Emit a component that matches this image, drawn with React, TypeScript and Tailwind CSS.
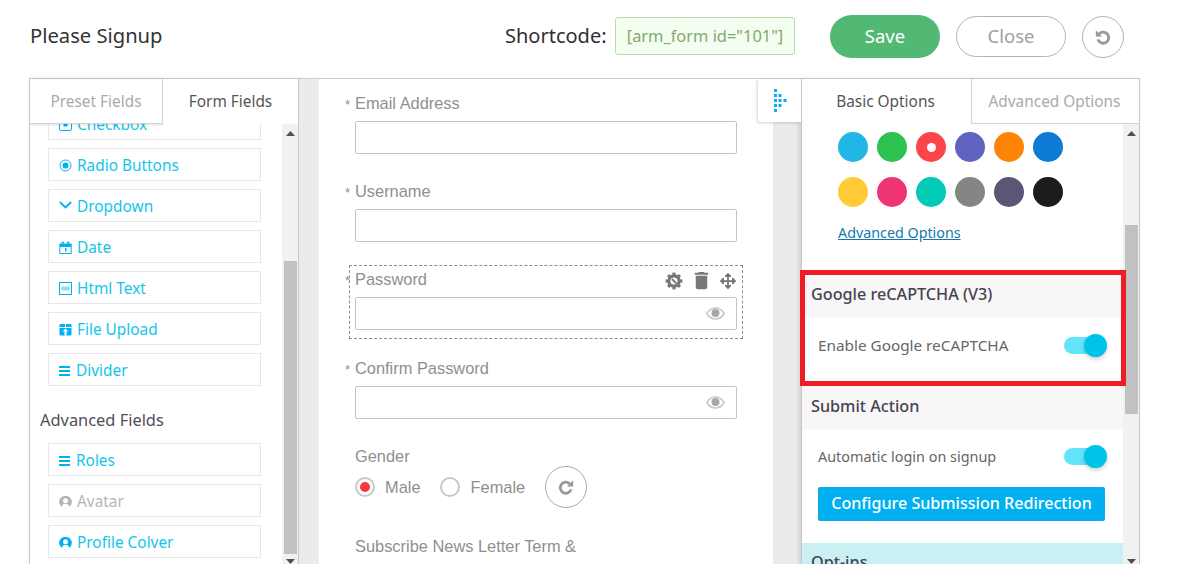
import React from "react";
import { MdDelete } from "react-icons/md";
import { FaArrowsAlt } from "react-icons/fa";

const C = "#00b0f0";

const Ic = ({ children }: { children: React.ReactNode }) => (
  <svg width="13" height="13" viewBox="0 0 13 13" className="shrink-0">{children}</svg>
);

const CheckIc = () => (
  <Ic>
    <rect x="0.5" y="0.5" width="12" height="12" rx="1.5" fill="none" stroke={C} strokeWidth="1" />
    <rect x="4.500" y="4.500" width="4" height="4" fill={C} />
  </Ic>
);
const RadioIc = () => (
  <Ic>
    <circle cx="6.5" cy="6.5" r="5.5" fill="none" stroke={C} strokeWidth="1" />
    <circle cx="6.5" cy="6.5" r="3" fill={C} />
  </Ic>
);
const ChevIc = () => (
  <svg width="13" height="13" viewBox="0 0 13 13" className="shrink-0 -translate-y-[1px]">
    <path d="M0.800 3 L6.500 8.500 L12.200 3" fill="none" stroke={C} strokeWidth="1.800" />
  </svg>
);
const DateIc = () => (
  <Ic>
    <path d="M0.800 3H3V1h1.500v2h4V1H10v2h2.200v9.500H0.800z" fill="none" stroke={C} strokeWidth="1" />
    <rect x="1" y="3" width="11" height="3" fill={C} />
    <rect x="6" y="7" width="1.500" height="3.500" fill={C} />
  </Ic>
);
const HtmlIc = () => (
  <Ic>
    <rect x="0.5" y="0.5" width="12" height="12" fill="none" stroke={C} strokeWidth="1" />
    <rect x="2" y="4.500" width="9" height="4" rx="2" fill="#8ddcf7" />
  </Ic>
);
const UploadIc = () => (
  <Ic>
    <rect x="0.500" y="1" width="12" height="11.500" rx="1" fill={C} />
    <path d="M0.500 4.500h12M6.500 1v3" stroke="#fff" strokeWidth="1" />
    <path d="M6.500 5.500 L9.500 8.500H7.500v4h-2v-4H3.500z" fill="#fff" />
  </Ic>
);
const LinesIc = () => (
  <svg width="11" height="10" viewBox="0 0 11 10" className="mr-[1px] shrink-0">
    <rect y="0" width="11" height="2" fill={C} />
    <rect y="4" width="11" height="2" fill={C} />
    <rect y="8" width="11" height="2" fill={C} />
  </svg>
);
const PersonIc = ({ color }: { color: string }) => (
  <svg width="13" height="14" viewBox="0 0 13 14" className="mt-[1px] shrink-0">
    <circle cx="6.500" cy="7" r="6.300" fill={color} />
    <circle cx="6.500" cy="5.800" r="2.500" fill="#fff" />
    <path d="M2.200 13c.5-3 2.200-4.200 4.300-4.200s3.800 1.200 4.300 4.200z" fill="#fff" />
  </svg>
);

const Redo = ({ flip }: { flip?: boolean }) => (
  <svg width="16" height="16" viewBox="0 0 16 16" className={flip ? "-scale-x-100" : ""}>
    <path d="M11.800 4.900A5.500 5.500 0 1 0 13.100 10.300" fill="none" stroke="#999" strokeWidth="2.800" />
    <path d="M15.200 1.200V7.500H8.900z" fill="#999" />
  </svg>
);

const Row = ({ icon, label, muted }: { icon: React.ReactNode; label: string; muted?: boolean }) => (
  <div className="mt-2 flex h-[33px] w-[213px] items-center gap-[5px] border border-[#e8e8e8] pl-[10px] pt-[2px]">
    {icon}
    <span className={`text-[15.400px] ${muted ? "text-[#b5b5b5]" : "text-[#12c5e8]"}`}>{label}</span>
  </div>
);

const Eye = () => (
  <svg width="19" height="13" viewBox="0 0 19 13">
    <path d="M0.800 6.500C3 3 6.300 1 9.500 1s6.500 2 8.700 5.500C16 10 12.700 12 9.500 12S3 10 .8 6.500z" fill="none" stroke="#c8c8c8" strokeWidth="1.500" />
    <circle cx="9.500" cy="6" r="4" fill="#a8a8a8" />
  </svg>
);

const Gear = () => (
  <svg width="18" height="18" viewBox="0 0 18 18">
    <g fill="#777">
      <circle cx="9" cy="9" r="6.700" />
      {[0, 45, 90, 135, 180, 225, 270, 315].map((a) => (
        <rect key={a} x="7.400" y="0.600" width="3.200" height="3.400" transform={`rotate(${a} 9 9)`} />
      ))}
    </g>
    <circle cx="9" cy="9" r="3.600" fill="#fff" />
    <path d="M7 7l4.500 4.500" stroke="#777" strokeWidth="1.800" />
  </svg>
);

const Label = ({ children, req = true }: { children: React.ReactNode; req?: boolean }) => (
  <div className="h-[22px] font-['Liberation_Sans',sans-serif] text-[16.400px] leading-[22px] text-[#8f8f8f]">
    {req && <span className="-ml-[10px] inline-block w-[10px] text-[13px]">*</span>}
    {children}
  </div>
);

const Input = ({ eye }: { eye?: boolean }) => (
  <div className="mt-[7px] flex h-[33px] w-[382px] items-center justify-end rounded-[2px] border border-[#c4c4c4] pr-[11px]">
    {eye && <Eye />}
  </div>
);

const Toggle = () => (
  <div className="flex h-[17px] w-[40px] shrink-0 items-center justify-end rounded-full bg-[#62e4fb]">
    <div className="-mr-[3px] h-[23px] w-[23px] shrink-0 rounded-full bg-[#00c3e8] shadow-[0_2px_4px_rgba(0,0,0,0.2)]" />
  </div>
);

const Arrow = ({ down }: { down?: boolean }) => (
  <svg width="9" height="5" viewBox="0 0 9 5" className={down ? "rotate-180" : ""}>
    <path d="M4.500 0L9 5H0z" fill="#505050" />
  </svg>
);

const Sw = ({ c, sel }: { c: string; sel?: boolean }) => (
  <div className="flex h-[30px] w-[30px] items-center justify-center rounded-full" style={{ background: c }}>
    {sel && <div className="h-[9px] w-[9px] rounded-full bg-white" />}
  </div>
);

export default function App() {
  return (
    <div className="h-[564px] w-[1177px] overflow-hidden bg-white font-['Noto_Sans',sans-serif]">
      <header className="flex h-[78px] items-start pl-[29px]">
        <div className="mt-[21px] w-[476px] pl-[1px] text-[20.200px] leading-[28px] text-[#333]">Please Signup</div>
        <div className="mt-[22px] w-[110px] text-[20px] leading-[28px] text-[#2f2f2f]">Shortcode:</div>
        <div className="mt-[17px] flex h-[38px] w-[180px] items-center justify-center rounded-[3px] border border-[#b9dcae] bg-[#f3fdf0] text-[16.400px] text-[#83a96f]">
          [arm_form id="101"]
        </div>
        <div className="ml-[35px] mt-[15px] flex h-[43px] w-[110px] items-center justify-center rounded-full bg-[#52b975] pb-[2px] text-[18.500px] text-white">Save</div>
        <div className="ml-[16px] mt-[16px] flex h-[41px] w-[110px] items-center justify-center rounded-full border border-[#b4b4b4] pb-[2px] text-[18.500px] text-[#a0a0a0]">Close</div>
        <div className="ml-[16px] mt-[16px] flex h-[42px] w-[42px] items-center justify-center rounded-full border border-[#b4b4b4]">
          <Redo flip />
        </div>
      </header>

      <main className="relative ml-[29px] flex h-[486px] w-[1111px] border-t border-[#cccccc]">
        {/* left */}
        <section className="flex w-[270px] shrink-0 flex-col border-x border-[#c8c8c8] shadow-[2px_0_4px_rgba(0,0,0,0.12)]">
          <div className="z-10 flex h-[45px] shrink-0 text-[15.400px]">
            <div className="flex w-[133px] items-center justify-center border-r border-b border-[#d4d4d4] bg-white pt-[2px] text-[#aaaaaa] shadow-[1px_1px_2px_rgba(0,0,0,0.12)]">Preset Fields</div>
            <div className="flex flex-1 items-center justify-center bg-white pt-[1px] text-[#555]">Form Fields</div>
          </div>
          <div className="flex min-h-0 flex-1">
            <div className="min-w-0 flex-1 overflow-hidden pl-[18px]">
              <div className="-mt-[25px]">
                <Row icon={<CheckIc />} label="Checkbox" />
                <Row icon={<RadioIc />} label="Radio Buttons" />
                <Row icon={<ChevIc />} label="Dropdown" />
                <Row icon={<DateIc />} label="Date" />
                <Row icon={<HtmlIc />} label="Html Text" />
                <Row icon={<UploadIc />} label="File Upload" />
                <Row icon={<LinesIc />} label="Divider" />
                <div className="-ml-[8px] mb-[12px] mt-[23px] text-[16.400px] leading-[22px] text-[#4f4f58]">Advanced Fields</div>
                <Row icon={<LinesIc />} label="Roles" />
                <Row icon={<PersonIc color="#b5b5b5" />} label="Avatar" muted />
                <Row icon={<PersonIc color={C} />} label="Profile Colver" />
              </div>
            </div>
            <div className="flex w-[16px] shrink-0 flex-col items-center bg-[#f1f1f1] pl-[2px] pr-[1px]">
              <div className="mt-[7px] flex"><Arrow /></div>
              <div className="mt-[125px] h-[293px] w-[13px] shrink-0 bg-[#c1c1c1]" />
              <div className="mt-[5px] flex"><Arrow down /></div>
            </div>
          </div>
        </section>

        {/* center */}
        <section className="flex min-w-0 flex-1 bg-[#ebebeb] pl-[20px] pr-[28px]">
          <div className="flex-1 overflow-hidden bg-white pl-[36px] pt-[13px]">
            <Label>Email Address</Label>
            <Input />
            <div className="mt-[26px]"><Label>Username</Label></div>
            <Input />
            <div className="-ml-[6px] mt-[23px] h-[74px] w-[394px] border border-dashed border-[#8c8c8c] pl-[5px] pt-[2px]">
              <div className="flex h-[22px] w-[382px] items-center justify-between">
                <Label>Password</Label>
                <div className="flex items-center gap-[8px] pr-[1px] pt-[3px]">
                  <Gear />
                  <MdDelete size={23} color="#777" className="ml-[-1px] mr-[-1px]" />
                  <FaArrowsAlt size={16} color="#777" />
                </div>
              </div>
              <Input eye />
            </div>
            <div className="mt-[18px]"><Label>Confirm Password</Label></div>
            <Input eye />
            <div className="mt-[26px]"><Label req={false}>Gender</Label></div>
            <div className="mt-[-1px] flex h-[42px] items-center font-['Liberation_Sans',sans-serif] text-[16.400px] text-[#8f8f8f]">
              <div className="flex h-[20px] w-[20px] items-center justify-center rounded-full border-2 border-[#c8c8c8]">
                <div className="h-[10px] w-[10px] rounded-full bg-[#f9373f]" />
              </div>
              <span className="ml-[10px]">Male</span>
              <div className="ml-[19px] h-[20px] w-[20px] rounded-full border-2 border-[#c8c8c8]" />
              <span className="ml-[11px]">Female</span>
              <div className="ml-[20px] flex h-[42px] w-[42px] items-center justify-center rounded-full border border-[#aaa]">
                <Redo />
              </div>
            </div>
            <div className="mt-[27px]"><Label req={false}>Subscribe News Letter Term &amp;</Label></div>
          </div>
        </section>

        <div className="absolute left-[729px] top-0 z-20 flex h-[43px] w-[43px] items-center justify-center rounded-bl-[3px] bg-white shadow-[-1px_1px_3px_rgba(0,0,0,0.18)]">
          <svg width="14" height="23" viewBox="0 0 14 23" fill={C}>
            <rect x="1" y="0" width="3" height="3" /><rect x="1" y="5" width="3" height="3" /><rect x="1" y="10" width="3" height="3" /><rect x="1" y="15" width="3" height="3" /><rect x="1" y="20" width="3" height="3" />
            <rect x="5.500" y="5" width="3" height="3" /><rect x="5.500" y="10" width="3" height="3" /><rect x="5.500" y="15" width="3" height="3" />
            <rect x="10.500" y="10" width="3" height="3" />
          </svg>
        </div>

        {/* right */}
        <section className="flex w-[339px] shrink-0 flex-col border-x border-[#c8c8c8] shadow-[-2px_0_4px_rgba(0,0,0,0.12)]">
          <div className="z-10 flex h-[45px] shrink-0 text-[15.400px]">
            <div className="flex w-[169px] items-center justify-center bg-white pr-[2px] pt-[1px] text-[#555]">Basic Options</div>
            <div className="flex flex-1 items-center justify-center border-l border-b border-[#d4d4d4] bg-white pr-[2px] pt-[2px] text-[#aaaaaa]">Advanced Options</div>
          </div>
          <div className="flex min-h-0 flex-1">
            <div className="min-w-0 flex-1">
              <div className="flex flex-col gap-[15px] pl-[36px] pt-[8px]">
                <div className="flex gap-[9px]">
                  <Sw c="#22b6e7" /><Sw c="#2bc250" /><Sw c="#fc4548" sel /><Sw c="#6062c0" /><Sw c="#ff8304" /><Sw c="#0e7cd6" />
                </div>
                <div className="flex gap-[9px]">
                  <Sw c="#ffcc38" /><Sw c="#ee3474" /><Sw c="#02cab6" /><Sw c="#858585" /><Sw c="#5b5675" /><Sw c="#1c1c1c" />
                </div>
              </div>
              <div className="ml-[36px] mt-[15px] text-[14.300px] leading-[22px] text-[#1379ad] underline">Advanced Options</div>
              <div className="relative z-10 -ml-[2px] mt-[26px] h-[116px] w-[326px] border-[5px] border-[#ee1c25]">
                <div className="flex h-[43px] items-center bg-[#f8f6f7] pb-[5px] pl-[6px] text-[16.200px] font-medium text-[#444452]">Google reCAPTCHA (V3)</div>
                <div className="flex items-center justify-between pl-[13px] pr-[17px] pt-[16px] text-[15.300px] text-[#666]">
                  <span>Enable Google reCAPTCHA</span>
                  <Toggle />
                </div>
              </div>
              <div className="flex h-[44px] items-center bg-[#f8f6f7] pb-[4px] pl-[9px] text-[16.200px] font-medium text-[#444452]">Submit Action</div>
              <div className="flex h-[54px] items-center justify-between pb-[1px] pl-[16px] pr-[19px] text-[14.400px] text-[#666]">
                <span>Automatic login on signup</span>
                <Toggle />
              </div>
              <div className="ml-[16px] mt-[3px] flex h-[34px] w-[287px] items-center justify-center rounded-[2px] bg-[#00b0f0] pb-[2px] text-[16.100px] font-medium text-white">Configure Submission Redirection</div>
              <div className="mt-[22px] h-[40px] bg-[#c9f0f3] pl-[9px] pt-[7px] text-[16.200px] font-medium text-[#444452]">Opt-ins</div>
            </div>
            <div className="flex w-[16px] shrink-0 flex-col items-center bg-[#f1f1f1] pl-[2px] pr-[1px]">
              <div className="mt-[7px] flex"><Arrow /></div>
              <div className="mt-[89px] h-[189px] w-[13px] shrink-0 bg-[#c1c1c1]" />
              <div className="mt-[145px] flex"><Arrow down /></div>
            </div>
          </div>
        </section>
      </main>
    </div>
  );
}
